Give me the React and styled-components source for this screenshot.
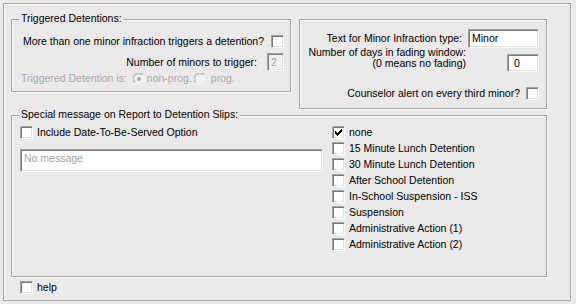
import React from "react";
import styled, { createGlobalStyle } from "styled-components";

const GlobalStyle = createGlobalStyle`
  html, body {
    margin: 0;
    padding: 0;
    background: #ece9eb;
  }
  body {
    font-family: "Liberation Sans", Arial, sans-serif;
    font-size: 10.5px;
    line-height: 13px;
    color: #000;
  }
`;

const etched = `
  border: 1px solid #a6a5a9;
  box-shadow: inset 1px 1px 0 #fff, 1px 1px 0 #fff;
`;

const Frame = styled.div`
  box-sizing: border-box;
  margin: 3px 0 0 3px;
  width: 568px;
  height: 298px;
  padding: 15px 0 0 7px;
  ${etched}
`;

const TopRow = styled.div`
  display: flex;
  align-items: flex-start;
  gap: 8px;
`;

const Group = styled.div`
  position: relative;
  box-sizing: border-box;
  width: ${(p) => p.$w}px;
  height: ${(p) => p.$h}px;
  margin-top: ${(p) => p.$mt || 0}px;
  padding: ${(p) => p.$pad};
  ${etched}
`;

const Legend = styled.span`
  position: absolute;
  top: -8px;
  left: 7px;
  padding: 0 2px;
  background: #ece9eb;
  line-height: 13px;
  white-space: nowrap;
`;

const Row = styled.div`
  display: flex;
  align-items: ${(p) => p.$align || "center"};
  justify-content: ${(p) => (p.$end ? "flex-end" : "flex-start")};
  height: ${(p) => (p.$h ? `${p.$h}px` : "auto")};
  margin-top: ${(p) => p.$mt || 0}px;
  margin-left: ${(p) => p.$ml || 0}px;
`;

const Label = styled.span`
  white-space: nowrap;
  margin-right: ${(p) => p.$mr || 0}px;
  margin-left: ${(p) => p.$ml || 0}px;
  color: ${(p) => (p.$disabled ? "#a9a8ab" : "#000")};
`;

const TwoLineLabel = styled.span`
  display: flex;
  flex-direction: column;
  align-items: flex-end;
  line-height: 11px;
  margin-top: -7px;
  margin-right: ${(p) => p.$mr}px;
  white-space: nowrap;
`;

const Box = styled.span`
  box-sizing: border-box;
  flex: none;
  display: inline-flex;
  align-items: center;
  justify-content: center;
  width: 13px;
  height: 13px;
  background: ${(p) => (p.$disabled ? "#f3f3f3" : "#fff")};
  border: 1px solid;
  border-color: #a3a3a3 #fff #fff #a3a3a3;
  box-shadow: inset 1px 1px 0 #7c7c7c, inset -1px -1px 0 #e2e2e2;
`;

const Field = styled.div`
  box-sizing: border-box;
  flex: none;
  width: ${(p) => p.$w}px;
  height: ${(p) => p.$h}px;
  padding: 2px 0 0 ${(p) => p.$pl || 3}px;
  background: ${(p) => (p.$disabled ? "#f3f3f3" : "#fff")};
  color: ${(p) => (p.$muted ? "#a3a3a3" : "#000")};
  border: 1px solid;
  border-color: #a3a3a3 #fff #fff #a3a3a3;
  box-shadow: inset 1px 1px 0 #7c7c7c, inset -1px -1px 0 #e2e2e2;
  line-height: 13px;
  white-space: nowrap;
  overflow: hidden;
`;

const Columns = styled.div`
  display: flex;
  gap: 9px;
`;

const LeftCol = styled.div`
  width: 303px;
  display: flex;
  flex-direction: column;
`;

const List = styled.div`
  display: flex;
  flex-direction: column;
`;

const CheckBox = ({ checked, disabled }) => (
  <Box $disabled={disabled}>
    {checked && (
      <svg width="7" height="7" viewBox="0 0 7 7" shapeRendering="crispEdges">
        <path
          fill="#000"
          d="M6 0h1v1h-1z M5 1h2v1h-2z M0 2h1v1h-1z M4 2h3v1h-3z M0 3h2v1h-2z M3 3h3v1h-3z M0 4h5v1h-5z M1 5h3v1h-3z M2 6h1v1h-1z"
        />
      </svg>
    )}
  </Box>
);

const Radio = ({ checked, ml }) => (
  <svg width="12" height="12" viewBox="0 0 12 12" style={{ marginLeft: ml, flex: "none" }}>
    <circle cx="6" cy="6" r="5.5" fill="#f3f3f3" />
    <path d="M1.6 9.9 A5.5 5.5 0 0 1 9.9 1.6" fill="none" stroke="#a3a3a3" strokeWidth="1" />
    <path d="M2.4 9 A4.4 4.4 0 0 1 9 2.4" fill="none" stroke="#cfcfcf" strokeWidth="1" />
    {checked && <circle cx="6" cy="6" r="2" fill="#a9a8ab" />}
  </svg>
);

const slips = [
  "none",
  "15 Minute Lunch Detention",
  "30 Minute Lunch Detention",
  "After School Detention",
  "In-School Suspension - ISS",
  "Suspension",
  "Administrative Action (1)",
  "Administrative Action (2)",
];

export default function App() {
  return (
    <>
      <GlobalStyle />
      <Frame>
        <TopRow>
          <Group $w={280} $h={73} $pad="15px 6px 0 9px">
            <Legend>Triggered Detentions:</Legend>
            <Row $end $h={13}>
              <Label $mr={7}>More than one minor infraction triggers a detention?</Label>
              <CheckBox />
            </Row>
            <Row $end $h={18} $mt={5}>
              <Label $mr={10}>Number of minors to trigger:</Label>
              <Field $w={17} $h={18} $disabled $muted>2</Field>
            </Row>
            <Row $h={13} $mt={1}>
              <Label $disabled>Triggered Detention is:</Label>
              <Radio checked ml={6} />
              <Label $disabled $ml={2}>non-prog.</Label>
              <Radio ml={2} />
              <Label $disabled $ml={5}>prog.</Label>
            </Row>
          </Group>
          <Group $w={248} $h={90} $pad="9px 7px 0 0">
            <Row $end $h={19}>
              <Label $mr={6}>Text for Minor Infraction type:</Label>
              <Field $w={71} $h={19}>Minor</Field>
            </Row>
            <Row $end $align="flex-start" $mt={6}>
              <TwoLineLabel $mr={41}>
                <span>Number of days in fading window:</span>
                <span>(0 means no fading)</span>
              </TwoLineLabel>
              <Field $w={32} $h={18} $pl={6}>0</Field>
            </Row>
            <Row $end $h={13} $mt={15}>
              <Label $mr={6}>Counselor alert on every third minor?</Label>
              <CheckBox />
            </Row>
          </Group>
        </TopRow>
        <Group $w={536} $h={162} $mt={6} $pad="8px 0 0 8px">
          <Legend>Special message on Report to Detention Slips:</Legend>
          <Columns>
            <LeftCol>
              <Row $h={16}>
                <CheckBox />
                <Label $ml={4}>Include Date-To-Be-Served Option</Label>
              </Row>
              <Row $mt={9}>
                <Field $w={303} $h={23} $muted>No message</Field>
              </Row>
            </LeftCol>
            <List>
              {slips.map((s, i) => (
                <Row key={s} $h={16}>
                  <CheckBox checked={i === 0} />
                  <Label $ml={4}>{s}</Label>
                </Row>
              ))}
            </List>
          </Columns>
        </Group>
        <Row $h={13} $mt={4} $ml={9}>
          <CheckBox />
          <Label $ml={4}>help</Label>
        </Row>
      </Frame>
    </>
  );
}
